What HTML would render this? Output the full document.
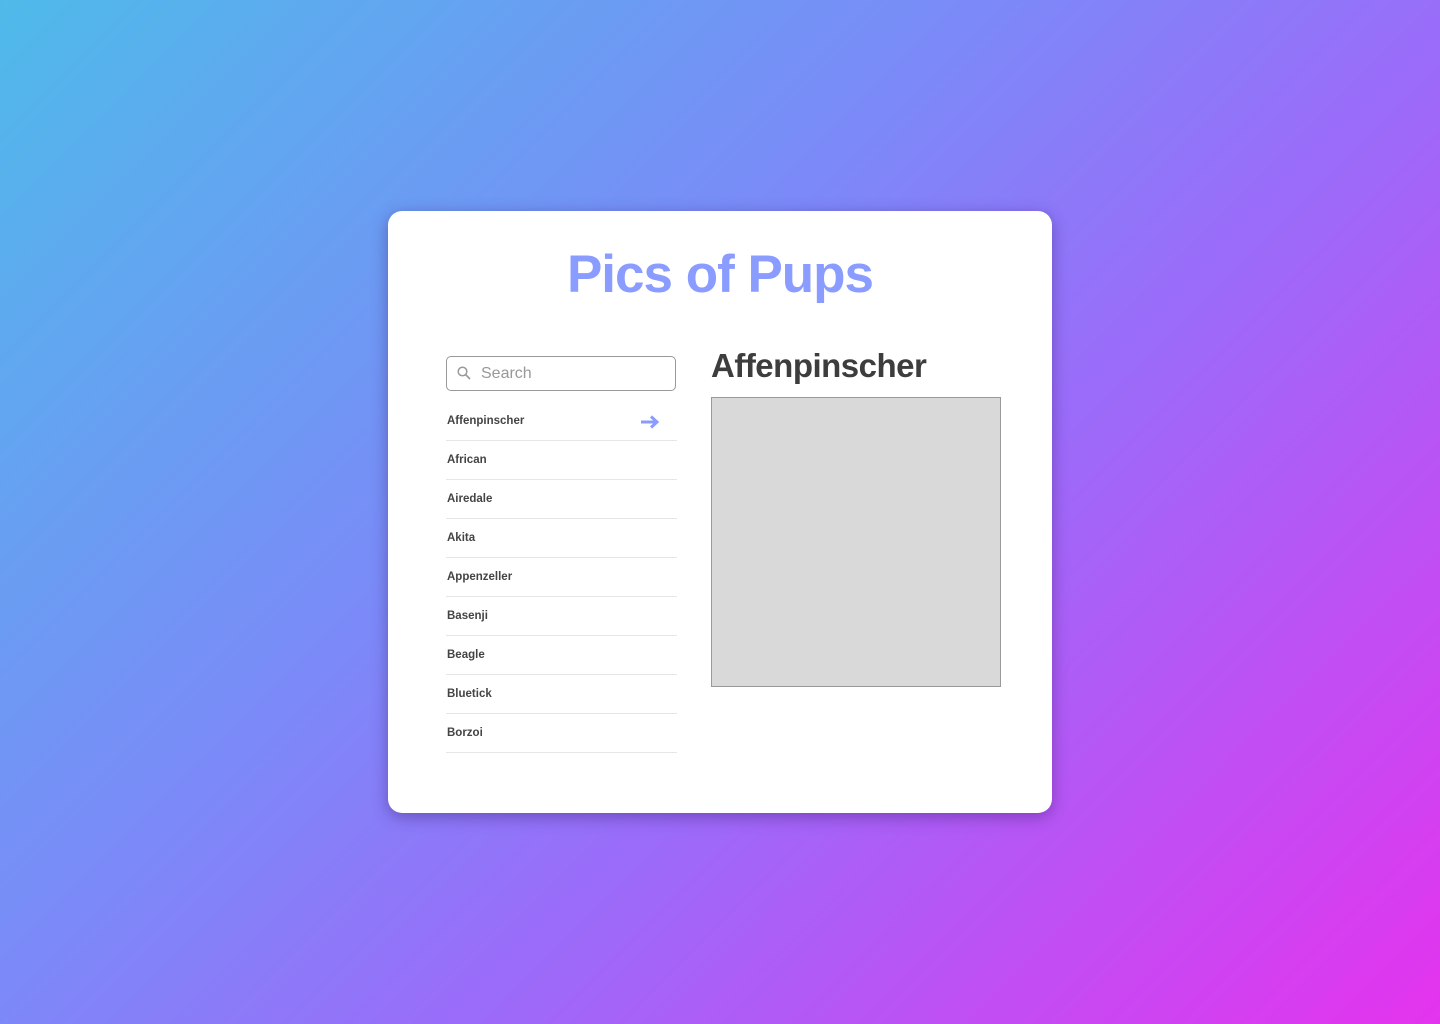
<!DOCTYPE html>
<html><head><meta charset="utf-8"><style>
html,body{margin:0;padding:0;width:1440px;height:1024px;overflow:hidden}
body{background:linear-gradient(135deg,#4fbaea 0%,#7b8af8 40%,#9a6cf9 60%,#e433ee 100%);font-family:"Liberation Sans",sans-serif;position:relative}
.card{position:absolute;left:388px;top:211px;width:664px;height:602px;background:#fff;border-radius:14px;box-shadow:0 4px 16px rgba(60,30,120,.45)}
h1{position:absolute;left:0;width:664px;top:33px;margin:0;text-align:center;font-size:53px;font-weight:bold;color:#8a9cff;letter-spacing:-1px}
.search{position:absolute;left:58px;top:145px;width:230px;height:35px;border:1px solid #999;border-radius:5px;box-sizing:border-box}
.search span{position:absolute;left:34px;top:8px;font-size:16px;color:#999}
.search svg{position:absolute;left:10px;top:9px}
.list{position:absolute;left:58px;top:191px;width:231px}
.row{height:38px;border-bottom:1px solid #e6e6e6;font-size:11.5px;font-weight:bold;color:#444;line-height:38px;padding-left:1px;position:relative}
.row svg{position:absolute;right:17px;top:13px}
h2{position:absolute;left:323px;top:136px;margin:0;font-size:33px;font-weight:bold;color:#3d3d3d;letter-spacing:-0.5px}
.img{position:absolute;left:323px;top:186px;width:290px;height:290px;background:#d9d9d9;border:1px solid #999;box-sizing:border-box}
</style></head><body>
<div class="card">
<h1>Pics of Pups</h1>
<div class="search"><svg width="14" height="14" viewBox="0 0 14 14"><circle cx="5.5" cy="5.5" r="4.3" fill="none" stroke="#999" stroke-width="1.5"/><path d="M8.7 8.7L13 13" stroke="#999" stroke-width="1.7"/></svg><span>Search</span></div>
<div class="list">
<div class="row">Affenpinscher<svg width="20" height="14" viewBox="0 0 20 14"><path d="M1 7H17M11 1.5L17 7L11 12.5" fill="none" stroke="#8a9cff" stroke-width="3"/></svg></div>
<div class="row">African</div>
<div class="row">Airedale</div>
<div class="row">Akita</div>
<div class="row">Appenzeller</div>
<div class="row">Basenji</div>
<div class="row">Beagle</div>
<div class="row">Bluetick</div>
<div class="row">Borzoi</div>
</div>
<h2>Affenpinscher</h2>
<div class="img"></div>
</div>
</body></html>
